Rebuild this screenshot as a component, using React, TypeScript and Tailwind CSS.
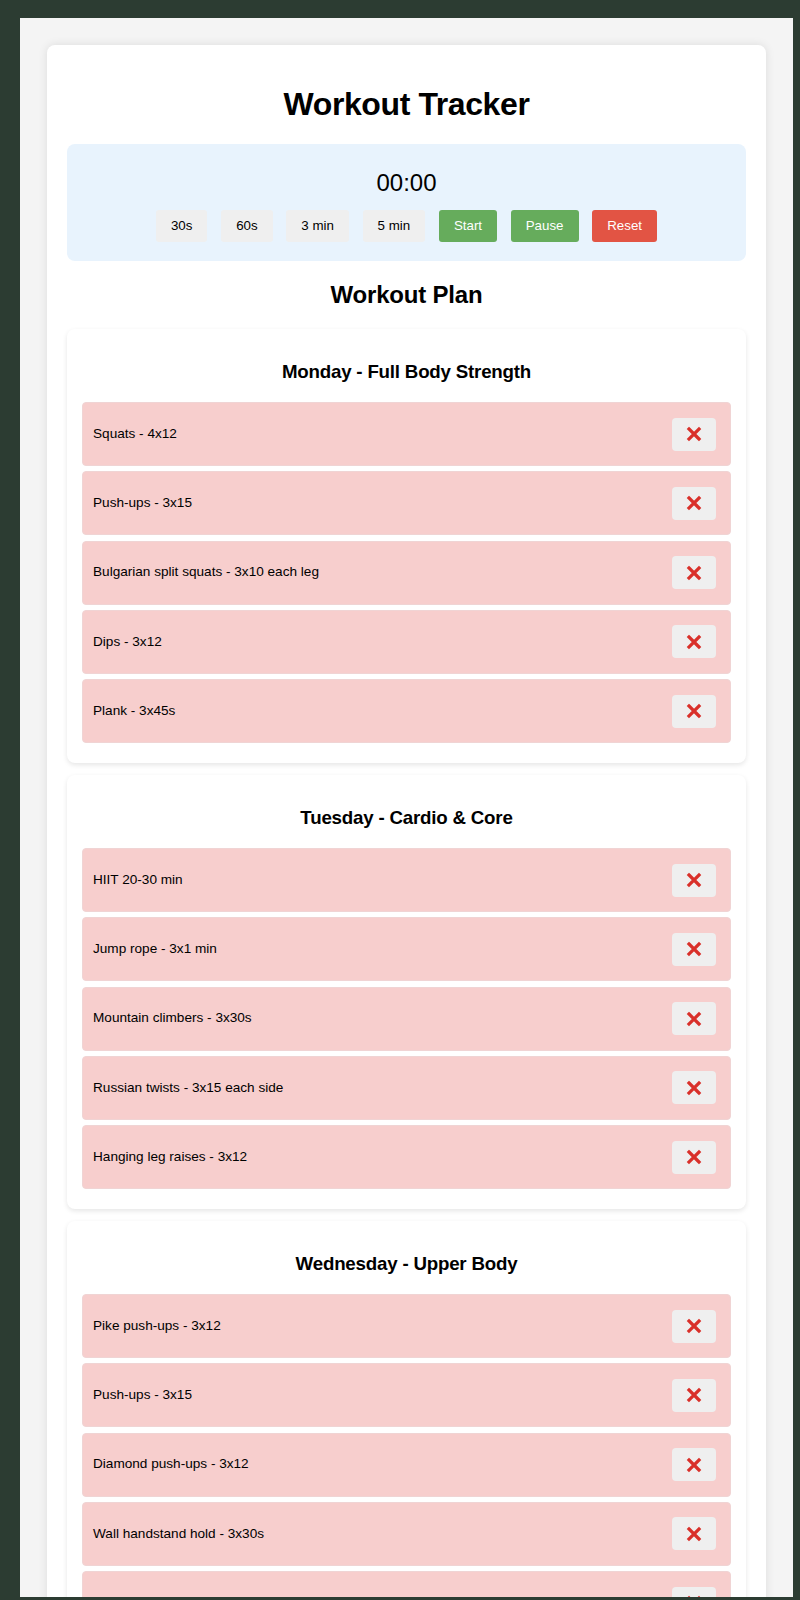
import React from 'react';

const days = [
  {
    title: 'Monday - Full Body Strength',
    exercises: ['Squats - 4x12', 'Push-ups - 3x15', 'Bulgarian split squats - 3x10 each leg', 'Dips - 3x12', 'Plank - 3x45s'],
  },
  {
    title: 'Tuesday - Cardio & Core',
    exercises: ['HIIT 20-30 min', 'Jump rope - 3x1 min', 'Mountain climbers - 3x30s', 'Russian twists - 3x15 each side', 'Hanging leg raises - 3x12'],
  },
  {
    title: 'Wednesday - Upper Body',
    exercises: ['Pike push-ups - 3x12', 'Push-ups - 3x15', 'Diamond push-ups - 3x12', 'Wall handstand hold - 3x30s', ''],
  },
];

function CrossIcon() {
  return (
    <svg width="16" height="16" viewBox="0 0 16 16" fill="none">
      <path d="M3 3L13 13M13 3L3 13" stroke="#d9302a" strokeWidth="3.2" strokeLinecap="square" />
    </svg>
  );
}

function ExerciseRow({ name }: { name: string }) {
  return (
    <div className="flex h-[64px] items-center justify-between rounded-[4px] border border-[#f0d4d4] bg-[#f7cecd] pl-[10px] pr-[14px]">
      <span className="text-[13.6px] text-black">{name}</span>
      <button className="flex h-[33px] w-[44px] items-center justify-center rounded-[4px] bg-[#efefef]">
        <CrossIcon />
      </button>
    </div>
  );
}

export default function App() {
  const presets = ['30s', '60s', '3 min', '5 min'];

  return (
    <div
      className="h-[1600px] bg-[#2c3c32] pt-[18px] pl-[20px] pr-[7px] pb-[3px]"
      style={{ fontFamily: '"Liberation Sans", Arial, sans-serif' }}
    >
      <div className="h-full overflow-hidden bg-[#f4f4f4] px-[27px] pt-[27px]">
        <div className="rounded-[8px] bg-white p-[20px] shadow-[0_0_10px_rgba(0,0,0,0.1)]">
          <h1 className="my-[21px] text-center text-[32px] font-bold leading-[37px] tracking-[-0.4px] text-black">Workout Tracker</h1>

          <div className="rounded-[8px] bg-[#e8f3fd] pt-[25px] pb-[19px]">
            <div className="text-center text-[24px] leading-[28px] text-black">00:00</div>
            <div className="mt-[13px] flex justify-center gap-[13.7px]">
              {presets.map((p) => (
                <button key={p} className="h-[32px] rounded-[3px] bg-[#efefef] px-[15px] text-[13.33px] text-black">
                  {p}
                </button>
              ))}
              <button className="h-[32px] rounded-[3px] bg-[#66ac5c] px-[15px] text-[13.33px] text-white">Start</button>
              <button className="h-[32px] rounded-[3px] bg-[#66ac5c] px-[15px] text-[13.33px] text-white">Pause</button>
              <button className="h-[32px] rounded-[3px] bg-[#e25444] px-[15px] text-[13.33px] text-white">Reset</button>
            </div>
          </div>

          <h2 className="my-[20px] text-center text-[24px] font-bold leading-[28px] tracking-[-0.2px] text-black">Workout Plan</h2>

          <div className="flex flex-col gap-[12px]">
            {days.map((day) => (
              <div key={day.title} className="rounded-[8px] bg-white px-[15px] pt-[15px] pb-[20px] shadow-[0_2px_5px_rgba(0,0,0,0.1)]">
                <h3 className="mt-[17px] mb-[19px] text-center text-[18.72px] font-bold leading-[22px] tracking-[-0.2px] text-black">{day.title}</h3>
                <div className="flex flex-col gap-[5.25px]">
                  {day.exercises.map((ex, i) => (
                    <ExerciseRow key={ex + i} name={ex} />
                  ))}
                </div>
              </div>
            ))}
          </div>
        </div>
      </div>
    </div>
  );
}
